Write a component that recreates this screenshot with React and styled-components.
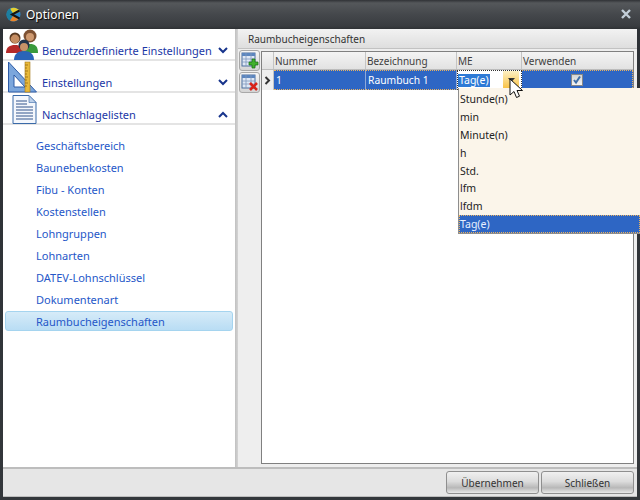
import React from "react";
import styled, { createGlobalStyle } from "styled-components";

const Global = createGlobalStyle`
  html, body { margin: 0; padding: 0; width: 640px; height: 500px; overflow: hidden; background: #2b2f33; }
  * { box-sizing: border-box; }
  #root { width: 640px; height: 500px; }
`;

const Win = styled.div`
  width: 640px; height: 500px; position: relative; display: flex; flex-direction: column;
  background: linear-gradient(#2c3035, #33373b);
  font-family: "Noto Sans", "DejaVu Sans", sans-serif; font-size: 11px; color: #2a2a2a;
`;
const TitleBar = styled.div`
  height: 29px; flex: none; display: flex; align-items: center; padding: 0 9px 1px 6px; gap: 5px;
  background: linear-gradient(#303236 0, #55585b 3px, #45484c 14px, #393c40 26px, #2e3134 100%);
  color: #fff; font-size: 12px; text-shadow: 1px 1px 1px #000;
`;
const TitleText = styled.span`flex: 1;`;
const Client = styled.div`
  flex: 1; margin: 0 3px 3px; display: flex; flex-direction: column; background: #e6e6e6; min-height: 0;
`;
const Main = styled.div`flex: 1; display: flex; min-height: 0;`;
const Left = styled.div`width: 232px; flex: none; background: #fff; display: flex; flex-direction: column;`;
const GroupHead = styled.div`
  height: 32px; flex: none; display: flex; align-items: flex-end; padding: 0 5px 0 39px;
  border-bottom: 2px solid #e4e4e4; position: relative;
`;
const GroupLabel = styled.span`
  flex: 1; color: #1b37a6; font-size: 11px; line-height: 16px; white-space: nowrap;
`;
const GroupIcon = styled.svg`position: absolute; left: ${p => p.$left}px; top: 0;`;
const Chev = styled.svg`margin: 0 2px 5px 0; flex: none;`;
const Links = styled.div`display: flex; flex-direction: column; padding: 9px 2px 0 2px;`;
const Link = styled.div`
  height: ${p => (p.$active ? 20 : 22)}px; margin: ${p => (p.$active ? "1px 0" : "0")}; flex: none;
  display: flex; align-items: center; padding-left: 30px;
  color: #2557c8; font-size: 11px; border-radius: 3px;
  border: 1px solid ${p => (p.$active ? "#a5d4ef" : "transparent")};
  background: ${p => (p.$active ? "linear-gradient(#d6ebf8, #b9ddf4)" : "transparent")};
`;
const Splitter = styled.div`width: 3px; flex: none; background: linear-gradient(90deg, #c0c0c0, #d4d4d4);`;
const Right = styled.div`flex: 1; display: flex; flex-direction: column; min-width: 0; background: #eeeeee;`;
const PanelHead = styled.div`
  height: 20px; flex: none; display: flex; align-items: center; padding-left: 10px;
  background: linear-gradient(#f2f2f2, #dedede); border-bottom: 1px solid #c2c2c2; color: #333;
  font-size: 10px;
`;
const Body = styled.div`flex: 1; display: flex; min-height: 0; padding: 2px 3px 3px 0;`;
const Tools = styled.div`width: 23px; flex: none; display: flex; flex-direction: column; gap: 1px; padding-left: 1px; margin-top: -1px;`;
const ToolBtn = styled.div`
  width: 21px; height: 21px; border: 1px solid #a8a8a8; border-radius: 3px;
  background: linear-gradient(#f6f6f6, #d4d4d4); display: flex; align-items: center; justify-content: center;
`;
const Grid = styled.div`flex: 1; background: #fff; border: 1px solid #808080; display: flex; flex-direction: column; min-width: 0;`;
const Cols = "12px 92px 91px 65px 1fr";
const HeadRow = styled.div`
  height: 18px; flex: none; display: grid; grid-template-columns: ${Cols};
  background: linear-gradient(#f4f4f4, #e2e2e2); border-bottom: 1px solid #bcbcbc;
`;
const HeadCell = styled.div`
  padding-left: 1px; display: flex; align-items: center; color: #404040; font-size: 10px;
  border-right: 1px solid #c4c4c4;
  &:last-child { border-right: none; }
`;
const DataRow = styled.div`height: 20px; flex: none; display: grid; grid-template-columns: ${Cols};`;
const Indicator = styled.div`
  background: #efefef; border-right: 1px solid #c4c4c4; display: flex; align-items: center; justify-content: center;
`;
const Cell = styled.div`
  background: #2e66c4; color: #fff; display: flex; align-items: center; padding-left: 2px; font-size: 10.3px;
  border-top: 1px dotted #e9b260; border-bottom: 1px dotted #e9b260; border-right: 1px solid #8fa9d8;
  &:last-child { border-right: 1px dotted #e9b260; }
`;
const EditCell = styled.div`
  background: #fff; display: flex; align-items: center; justify-content: space-between;
  border: 1px dotted #333; font-size: 10.5px;
`;
const EditText = styled.span`background: #2e7ad6; color: #fff; padding: 0 1px; line-height: 13px;`;
const DropBtn = styled.div`
  width: 16px; height: 100%; background: linear-gradient(#fdf0c4, #f8c040); margin-right: 2px;
  display: flex; align-items: center; justify-content: center;
`;
const CheckCell = styled(Cell)`justify-content: center; padding: 0;`;
const CheckBox = styled.div`
  width: 12px; height: 12px; background: linear-gradient(#d4d4d4, #f4f4f4); border: 1px solid #888;
  display: flex; align-items: center; justify-content: center;
`;
const Drop = styled.div`
  position: absolute; left: 458px; top: 88px; width: 182px; height: 146px; background: #fbf5ea;
  border: 1px solid #8e8e8e; border-right: none; border-top: none; font-size: 10.5px; color: #222;
  display: flex; flex-direction: column; padding-top: 2px;
`;
const Opt = styled.div`
  height: 17.9px; flex: none; display: flex; align-items: center; padding-left: 1px;
  ${p => p.$sel ? "background: #2e66c4; color: #e8f0ff; outline: 1px dotted #e9b260; outline-offset: -1px;" : ""}
`;
const Cursor = styled.svg`position: absolute; left: 509px; top: 78px;`;
const Footer = styled.div`
  height: 30px; flex: none; display: flex; justify-content: flex-end; align-items: center; gap: 2px; padding-right: 3px;
  border-top: 2px solid #bdbdbd; border-bottom: 1px solid #bdbdbd; background: #e6e6e6;
`;
const Btn = styled.div`
  width: 93px; height: 23px; border: 1px solid #8f8f8f; border-radius: 3px;
  display: flex; align-items: center; justify-content: center; color: #333; font-size: 10px;
  background: linear-gradient(#f0f0f0 0, #dcdcdc 45%, #b8b8b8 75%, #e8e8e8 100%);
`;

const Users = () => (
  <GroupIcon $left={2} width="36" height="32" viewBox="0 0 36 32">
    <circle cx="10" cy="9" r="5.5" fill="#5a3a22" /><circle cx="10" cy="10" r="4.4" fill="#c58d62" />
    <path d="M1 24c0-6 4-8 9-8s9 2 9 8z" fill="#b52a2a" />
    <circle cx="25" cy="7" r="6.5" fill="#7d5132" /><circle cx="25" cy="8" r="4" fill="#cf9a70" />
    <path d="M17 24c0-7 3-9 8-9s8 2 8 9z" fill="#3a9a3c" />
    <circle cx="19" cy="16" r="5.5" fill="#24344a" /><circle cx="19" cy="18" r="4" fill="#c79268" />
    <path d="M9 31c0-6 4-9 10-9s10 3 10 9z" fill="#2a64b8" />
  </GroupIcon>
);
const Ruler = () => (
  <GroupIcon $left={5} width="36" height="32" viewBox="0 0 36 32">
    <path d="M.5 1l28 30H.5z M6 14v12h11z" fill="#7ba6dc" fillRule="evenodd" stroke="#2c5aa6" strokeWidth="1" />
    <rect x="17" y="1" width="5" height="30" fill="#e8b93a" stroke="#a5791c" strokeWidth=".6" />
    <path d="M17 4h3M17 7h2M17 10h3M17 13h2M17 16h3M17 19h2M17 22h3M17 25h2" stroke="#8a5e10" strokeWidth=".7" />
  </GroupIcon>
);
const Doc = () => (
  <GroupIcon $left={7} width="36" height="32" viewBox="0 0 36 32">
    <path d="M3 2.5h16l7 7v21H3z" fill="#f4f7fc" stroke="#3a6aa8" />
    <path d="M19 2.5v7h7z" fill="#bcd0ea" stroke="#3a6aa8" strokeWidth=".6" />
    <path d="M6 8h11M6 11h11M6 14h17M6 17h17M6 20h17M6 23h17M6 26h17" stroke="#33558c" />
  </GroupIcon>
);
const ChevIcon = ({ up }) => (
  <Chev width="10" height="7" viewBox="0 0 10 7">
    <path d={up ? "M1 6l4-4 4 4" : "M1 1l4 4 4-4"} fill="none" stroke="#17348c" strokeWidth="2" />
  </Chev>
);
const TableIco = ({ add }) => (
  <svg width="18" height="18" viewBox="0 0 18 18">
    <rect x="1" y="1" width="13" height="13" fill="#dfe8f5" stroke="#4d6f9e" />
    <rect x="1" y="1" width="13" height="3" fill="#5c86bf" />
    <path d="M1 7h13M1 10h13M5 1v13M10 1v13" stroke="#7d97bd" strokeWidth=".8" />
    {add ? (
      <path d="M11 7v3H8v3h3v3h3v-3h3v-3h-3V7z" fill="#42b02e" stroke="#176d12" strokeWidth=".7" />
    ) : (
      <path d="M9 9l7 7M16 9l-7 7" stroke="#d8231a" strokeWidth="2.6" />
    )}
  </svg>
);

const links = ["Geschäftsbereich","Baunebenkosten","Fibu - Konten","Kostenstellen","Lohngruppen","Lohnarten","DATEV-Lohnschlüssel","Dokumentenart","Raumbucheigenschaften"];
const opts = ["Stunde(n)","min","Minute(n)","h","Std.","lfm","lfdm","Tag(e)"];

export default function App() {
  return (
    <Win>
      <Global />
      <TitleBar>
        <svg width="15" height="15" viewBox="0 0 15 15">
          <circle cx="7.5" cy="7.5" r="7" fill="#2a86c8" />
          <path d="M4 2a7 7 0 0 1 10 2.5L8 7.5z" fill="#e6cf30" />
          <path d="M.6 7.5A7 7 0 0 1 4 1.5L7 7.5 4 13.5A7 7 0 0 1 .6 7.5z" fill="#1c7fa0" />
          <path d="M4 13.5A7 7 0 0 0 13 11.5L8 7.5z" fill="#e8852a" />
          <path d="M13.5 3.5L6 7.5l7.5 4" fill="none" stroke="#151515" strokeWidth="2" />
        </svg>
        <TitleText>Optionen</TitleText>
        <svg width="10" height="10" viewBox="0 0 10 10">
          <path d="M1 1l8 8M9 1l-8 8" stroke="#c2ced9" strokeWidth="2.4" />
        </svg>
      </TitleBar>
      <Client>
        <Main>
          <Left>
            <GroupHead><Users /><GroupLabel>Benutzerdefinierte Einstellungen</GroupLabel><ChevIcon /></GroupHead>
            <GroupHead><Ruler /><GroupLabel>Einstellungen</GroupLabel><ChevIcon /></GroupHead>
            <GroupHead><Doc /><GroupLabel>Nachschlagelisten</GroupLabel><ChevIcon up /></GroupHead>
            <Links>
              {links.map((l, i) => <Link key={l} $active={i === links.length - 1}>{l}</Link>)}
            </Links>
          </Left>
          <Splitter />
          <Right>
            <PanelHead>Raumbucheigenschaften</PanelHead>
            <Body>
              <Tools>
                <ToolBtn><TableIco add /></ToolBtn>
                <ToolBtn><TableIco /></ToolBtn>
              </Tools>
              <Grid>
                <HeadRow>
                  <HeadCell /><HeadCell>Nummer</HeadCell><HeadCell>Bezeichnung</HeadCell><HeadCell>ME</HeadCell><HeadCell>Verwenden</HeadCell>
                </HeadRow>
                <DataRow>
                  <Indicator>
                    <svg width="7" height="9" viewBox="0 0 7 9"><path d="M1.5 1l3.5 3.5L1.5 8" fill="none" stroke="#333" strokeWidth="2" /></svg>
                  </Indicator>
                  <Cell>1</Cell>
                  <Cell>Raumbuch 1</Cell>
                  <EditCell>
                    <EditText>Tag(e)</EditText>
                    <DropBtn><svg width="7" height="4" viewBox="0 0 7 4"><path d="M0 0h7L3.5 4z" fill="#333" /></svg></DropBtn>
                  </EditCell>
                  <CheckCell>
                    <CheckBox>
                      <svg width="10" height="10" viewBox="0 0 10 10"><path d="M2 5l2 2.5 4-6" fill="none" stroke="#3f6fa8" strokeWidth="2" /></svg>
                    </CheckBox>
                  </CheckCell>
                </DataRow>
              </Grid>
            </Body>
          </Right>
        </Main>
        <Footer>
          <Btn>Übernehmen</Btn>
          <Btn>Schließen</Btn>
        </Footer>
      </Client>
      <Drop>
        {opts.map((o, i) => <Opt key={o} $sel={i === opts.length - 1}>{o}</Opt>)}
      </Drop>
      <Cursor width="14" height="22" viewBox="0 0 14 22">
        <path d="M1 1v16l4-3.5 2.5 6 3-1.3-2.5-5.7h5.5z" fill="#fff" stroke="#111" strokeWidth="1" />
      </Cursor>
    </Win>
  );
}
